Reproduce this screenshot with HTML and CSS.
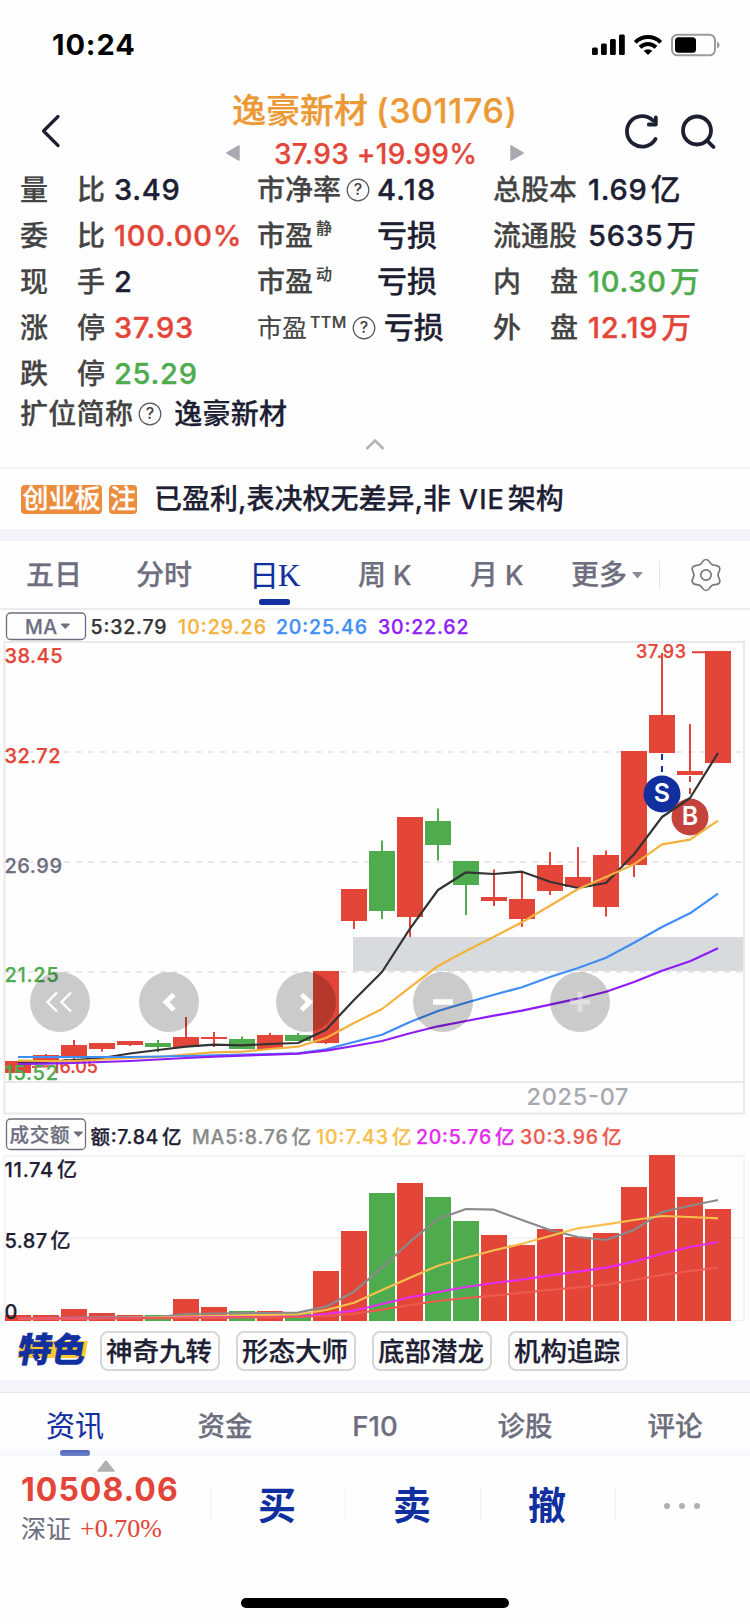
FILE: index.html
```html
<!DOCTYPE html>
<html lang="zh-CN">
<head>
<meta charset="utf-8">
<title>逸豪新材 (301176)</title>
<link rel="stylesheet" href="styles.css">
</head>
<body>
<div class="phone">
  <div class="status">
    <span class="clock">10:24</span>
    <svg class="status-icons" width="130" height="26" viewBox="590 32 130 26">
      <g>
        <rect x="592" y="47.500" width="5.800" height="7.500" rx="1.500"/>
        <rect x="601" y="43.500" width="5.800" height="11.500" rx="1.500"/>
        <rect x="610" y="39" width="5.800" height="16" rx="1.500"/>
        <rect x="619" y="34.500" width="5.800" height="20.500" rx="1.500"/>
      </g>
      <g fill="none" stroke="#000" stroke-width="4">
        <path d="M635.300 42.300a18 18 0 0 1 25.400 0"/>
        <path d="M640 47.300a11.500 11.500 0 0 1 16 0"/>
      </g>
      <path d="M643.700 50.800a6.500 6.500 0 0 1 8.600 0L648 55z"/>
      <rect x="672" y="34.700" width="43" height="20.600" rx="5.500" fill="none" stroke="#9b9b9b" stroke-width="2"/>
      <rect x="675" y="37.300" width="21" height="15.400" rx="3.500"/>
      <path d="M717 41.500q2.600 1 2.600 3.500t-2.600 3.500z" fill="#9b9b9b"/>
    </svg>
  </div>

  <header class="head">
    <svg class="back" width="22" height="36" viewBox="0 0 22 36"><path d="M18 3.500L3.500 18 18 32.500"/></svg>
    <div class="title">
      <div class="name"><span class="name-cn">逸豪新材</span><span class="name-code">(301176)</span></div>
      <div class="price">
        <svg width="14" height="16" viewBox="0 0 14 16"><path d="M13 1v14L1 8z"/></svg>
        <span class="price-text">37.93 +19.99%</span>
        <svg width="14" height="16" viewBox="0 0 14 16"><path d="M1 1v14l12-7z"/></svg>
      </div>
    </div>
    <svg class="tools" width="96" height="40" viewBox="622 112 96 40">
      <path d="M655.500 139a15.300 15.300 0 1 1-2.500-18.500"/>
      <path d="M655.800 117.500v7h-7"/>
      <circle cx="697" cy="130.500" r="14"/>
      <path d="M707.500 141l6 6"/>
    </svg>
  </header>

  <section class="stats">
    <div class="cell"><span class="lab spread"><i>量</i><i>比</i></span><span class="val">3.49</span></div>
    <div class="cell c2"><span class="lab">市净率</span><svg class="q q-a" viewBox="0 0 24 24"><circle cx="12" cy="12" r="10.800"/><text x="12" y="17.200">?</text></svg><span class="val">4.18</span></div>
    <div class="cell c3"><span class="lab spread">总股本</span><span class="val">1.69<b>亿</b></span></div>

    <div class="cell"><span class="lab spread"><i>委</i><i>比</i></span><span class="val red">100.00%</span></div>
    <div class="cell c2"><span class="lab wide">市盈<sup>静</sup></span><span class="val cn">亏损</span></div>
    <div class="cell c3"><span class="lab spread">流通股</span><span class="val">5635<b>万</b></span></div>

    <div class="cell"><span class="lab spread"><i>现</i><i>手</i></span><span class="val">2</span></div>
    <div class="cell c2"><span class="lab wide">市盈<sup>动</sup></span><span class="val cn">亏损</span></div>
    <div class="cell c3"><span class="lab spread"><i>内</i><i>盘</i></span><span class="val green">10.30<b>万</b></span></div>

    <div class="cell"><span class="lab spread"><i>涨</i><i>停</i></span><span class="val red">37.93</span></div>
    <div class="cell c2"><span class="lab ttm">市盈<sup>TTM</sup></span><svg class="q q-b" viewBox="0 0 24 24"><circle cx="12" cy="12" r="10.800"/><text x="12" y="17.200">?</text></svg><span class="val cn">亏损</span></div>
    <div class="cell c3"><span class="lab spread"><i>外</i><i>盘</i></span><span class="val red">12.19<b>万</b></span></div>

    <div class="cell"><span class="lab spread"><i>跌</i><i>停</i></span><span class="val green">25.29</span></div>
  </section>
  <div class="alias"><span class="lab">扩位简称</span><svg class="q" viewBox="0 0 24 24"><circle cx="12" cy="12" r="10.800"/><text x="12" y="17.200">?</text></svg><span class="alias-name">逸豪新材</span></div>
  <div class="fold"><svg width="20" height="12" viewBox="0 0 20 12"><path d="M1.500 11L10 2.500 18.500 11"/></svg></div>

  <div class="notice">
    <span class="tag">创业板</span><span class="tag tag-s">注</span>
    <span class="notice-text">已盈利,表决权无差异,非<em>VIE</em>架构</span>
  </div>

  <nav class="periods">
    <span class="p1">五日</span>
    <span class="p2">分时</span>
    <span class="p3 on">日<em>K</em></span>
    <span class="p4">周<em>K</em></span>
    <span class="p5">月<em>K</em></span>
    <span class="p6">更多<svg width="11" height="8" viewBox="0 0 11 8"><path d="M0 1h11L5.500 7.500z"/></svg></span>
    <span class="gear"><svg width="34" height="34" viewBox="-17 -17 34 34">
      <path d="M12 0C12 -3 15.150 -4.700 13.400 -7.750C11.650 -10.800 8.600 -8.900 6 -10.400"/>
      <path transform="rotate(60)" d="M12 0C12 -3 15.150 -4.700 13.400 -7.750C11.650 -10.800 8.600 -8.900 6 -10.400"/>
      <path transform="rotate(120)" d="M12 0C12 -3 15.150 -4.700 13.400 -7.750C11.650 -10.800 8.600 -8.900 6 -10.400"/>
      <path transform="rotate(180)" d="M12 0C12 -3 15.150 -4.700 13.400 -7.750C11.650 -10.800 8.600 -8.900 6 -10.400"/>
      <path transform="rotate(240)" d="M12 0C12 -3 15.150 -4.700 13.400 -7.750C11.650 -10.800 8.600 -8.900 6 -10.400"/>
      <path transform="rotate(300)" d="M12 0C12 -3 15.150 -4.700 13.400 -7.750C11.650 -10.800 8.600 -8.900 6 -10.400"/>
      <circle r="5.200"/></svg></span>
  </nav>

  <svg class="chart" width="750" height="715" viewBox="0 610 750 715">
    <g class="legend">
      <rect class="pick" x="6.500" y="613" width="79" height="26.500" rx="4"/>
      <text x="25" y="634" textLength="32" class="grey">MA</text>
      <path class="caret" d="M61 624h8.500l-4.200 4.500z"/>
      <text x="90.500" y="634.300" textLength="76" fill="#333" stroke="#333">5:32.79</text>
      <text x="178" y="634.300" textLength="88" fill="#f5b13d" stroke="#f5b13d">10:29.26</text>
      <text x="276" y="634.300" textLength="91" fill="#3f8ef7" stroke="#3f8ef7">20:25.46</text>
      <text x="378" y="634.300" textLength="90.500" fill="#8f1df5" stroke="#8f1df5">30:22.62</text>
    </g>
    <g class="frame">
      <path d="M4.500 642V1113.500H744V642zM4.500 1082H744"/>
      <path class="dash" d="M4 752H744M4 862H744M4 972H744"/>
      <path class="pale" d="M4.500 1156H744V1320.500H4.500zM4.500 1238H744"/>
    </g>
    <rect x="353" y="937" width="390" height="34" fill="#d7dbde"/>
    <g id="candles"></g>
    <g class="axis">
      <text x="4.500" y="662.500" textLength="58" class="red">38.45</text>
      <text x="4.500" y="762.500" textLength="56" class="red">32.72</text>
      <text x="4.500" y="872.500" textLength="57.500" class="grey">26.99</text>
      <text x="4.500" y="982" textLength="54" class="green">21.25</text>
    </g>
    <path d="M32 1067L52 1066M692 652.300H706" stroke="#e34639" stroke-width="2"/>
    <text x="52" y="1072.500" textLength="46" class="hilo">16.05</text>
    <text x="4.500" y="1080" textLength="53.500" class="axis-low">15.52</text>
    <text x="636" y="658" textLength="50" class="hilo">37.93</text>
    <path d="M662 754v18" stroke="#122f9f" stroke-width="2" stroke-dasharray="6 6"/>
    <path d="M690 776v18" stroke="#c4433d" stroke-width="2" stroke-dasharray="6 6"/>
    <circle cx="662" cy="794" r="18.500" fill="#122f9f"/>
    <circle cx="690" cy="817" r="18.500" fill="#c4433d"/>
    <text class="mark" x="662" y="802">S</text>
    <text class="mark" x="690" y="825">B</text>
    <g id="averages"></g>
    <g class="knobs">
      <circle cx="60" cy="1002" r="30"/><circle cx="169" cy="1002" r="30"/><circle cx="306" cy="1002" r="30"/><circle cx="443" cy="1002" r="30"/><circle cx="580" cy="1002" r="30"/>
    </g>
    <g fill="none" stroke="#fff">
      <path stroke-width="2.400" d="M57 992.500L47.500 1002l9.500 9.500M71 992.500L61.500 1002l9.500 9.500"/>
      <path stroke-width="5" d="M174 994.500L166 1002l8 8M301.500 994.500L309.500 1002l-8 8"/>
      <path stroke-width="5.500" d="M433 1002h20"/>
      <path stroke-width="5" stroke="rgba(255,255,255,.4)" d="M570 1002h17.500M590 1002h-2.500M580 992v7.500M580 1004.500v7.500"/>
    </g>
    <text class="month" x="526.500" y="1104.700" textLength="102">2025-07</text>

    <g class="legend">
      <rect class="pick" x="6.500" y="1119" width="79" height="30.500" rx="4"/>
      <text x="9.500" y="1142" textLength="60" class="grey">成交额</text>
      <path class="caret" d="M74 1132h8.500l-4.200 4.500z"/>
      <text x="90.500" y="1144.300" textLength="91" fill="#1d2033" stroke="#1d2033">额:7.84<tspan dx="3">亿</tspan></text>
      <text x="192" y="1144.300" textLength="119" fill="#8a8a8a" stroke="#8a8a8a">MA5:8.76<tspan dx="3">亿</tspan></text>
      <text x="316" y="1144.300" textLength="95.500" fill="#f5c04d" stroke="#f5c04d">10:7.43<tspan dx="3">亿</tspan></text>
      <text x="416" y="1144.300" textLength="98.500" fill="#e52df0" stroke="#e52df0">20:5.76<tspan dx="3">亿</tspan></text>
      <text x="520" y="1144.300" textLength="101.500" fill="#ec5a50" stroke="#ec5a50">30:3.96<tspan dx="3">亿</tspan></text>
    </g>
    <g id="volumes"></g>
    <g class="axis dark">
      <text x="4.500" y="1176.700" textLength="72.500">11.74<tspan dx="3">亿</tspan></text>
      <text x="4.500" y="1248.300" textLength="66">5.87<tspan dx="3">亿</tspan></text>
      <text x="4.500" y="1318.500">0</text>
    </g>
  </svg>

  <div class="features">
    <span class="special">特色</span>
    <span class="chip">神奇九转</span>
    <span class="chip">形态大师</span>
    <span class="chip">底部潜龙</span>
    <span class="chip">机构追踪</span>
  </div>

  <nav class="info">
    <span class="on">资讯</span><span>资金</span><span>F10</span><span>诊股</span><span>评论</span>
  </nav>

  <footer class="bar">
    <div class="index">
      <svg width="20" height="14" viewBox="0 0 20 14"><path d="M10 2l8 10H2z"/></svg>
      <div class="index-num">10508.06</div>
      <div class="index-sub"><span>深证</span><span class="chg">+0.70%</span></div>
    </div>
    <div class="act">买</div>
    <div class="act">卖</div>
    <div class="act">撤</div>
    <div class="act more"><i></i><i></i><i></i></div>
  </footer>
  <div class="home"></div>
</div>
<script src="chart.js"></script>
</body>
</html>
```

FILE: styles.css
```css
* { box-sizing: border-box; }
body {
  margin: 0;
  background: #fefefe;
  color: #1d2033;
  font-family: Inter, "Noto Sans CJK SC", sans-serif;
  font-weight: 500;
  -webkit-text-stroke: .25px;
}
i, em { font-style: normal; }
svg { display: block; flex: none; }
svg text { -webkit-text-stroke: 0; }
.red { color: #e34639; fill: #e34639; stroke: #e34639; }
.green { color: #4eab4e; fill: #4eab4e; stroke: #4eab4e; }
.grey { fill: #6e6e7e; stroke: #6e6e7e; }
.phone {
  width: 750px;
  height: 1624px;
  overflow: hidden;
  display: flex;
  flex-direction: column;
}

.status {
  height: 88px;
  padding: 2px 30px 0 52px;
  display: flex;
  align-items: center;
  justify-content: space-between;
}
.clock { color: #000; font-size: 29px; font-weight: 700; letter-spacing: .9px; -webkit-text-stroke: 0; margin-top: -1px; }

.head { height: 79px; display: flex; padding: 0 32px 0 40px; }
.back { margin-top: 25px; }
.back path, .tools path, .tools circle {
  fill: none; stroke: #1d2033; stroke-width: 3.8; stroke-linecap: round; stroke-linejoin: round;
}
.back path { stroke-width: 3.2; }
.title { flex: 1; padding: 0 0 0 164px; }
.name { display: flex; height: 45px; line-height: 46px; color: #ec9935; white-space: nowrap; }
.name-cn { width: 145px; padding-left: 6px; font-size: 34px; }
.name-code { font-size: 34px; padding-left: 5px; letter-spacing: .6px; }
.price { display: flex; align-items: center; height: 40px; }
.price path { fill: #a9a9b2; stroke: #a9a9b2; stroke-width: 1.5; stroke-linejoin: round; }
.price-text { width: 270px; padding: 1px 0 0 34px; font-size: 28px; letter-spacing: .3px; color: #e34639; white-space: nowrap; }
.tools { margin-top: 24px; }

.stats {
  display: grid;
  grid-template-columns: 237px 236px 236px;
  grid-auto-rows: 46px;
  padding-left: 20px;
  height: 230px;
}
.cell { display: flex; align-items: center; height: 46px; }
.lab { font-size: 28px; color: #444; line-height: 46px; white-space: nowrap; }
.spread { width: 85px; display: flex; justify-content: space-between; }
.val { font-size: 29px; line-height: 46px; height: 46px; padding-left: 9px; white-space: nowrap; letter-spacing: .75px; -webkit-text-stroke: .35px; }
.val b { font-weight: 500; margin-left: 3px; font-size: 30px; line-height: 1; letter-spacing: 0; -webkit-text-stroke: .25px; }
.c2 .val { padding-left: 7px; letter-spacing: 1.2px; }
.c2 .cn { font-size: 30px; line-height: 44px; padding-left: 8px; letter-spacing: 0; -webkit-text-stroke: .25px; }
.c3 .val { padding-left: 10px; }
.wide { width: 112px; }
.lab sup { font-size: 16px; line-height: 1; vertical-align: 12px; margin-left: 3px; -webkit-text-stroke: .2px; }
.ttm { font-size: 25px; font-weight: 400; -webkit-text-stroke: .1px; }
.ttm sup { letter-spacing: .4px; vertical-align: 9px; font-weight: 500; }
.q { width: 24px; height: 24px; }
.q circle { fill: none; stroke: #555; stroke-width: 1.2; }
.q text { font-size: 16px; text-anchor: middle; fill: #444; }
.q-a { margin-left: 5px; }
.q-b { margin-left: 5px; }
.alias { height: 36px; padding-left: 20px; display: flex; align-items: center; }
.alias .lab { line-height: 34px; height: 36px; letter-spacing: .3px; }
.alias .q { margin-left: 5px; margin-top: -2px; }
.alias-name { font-size: 28px; margin-left: 12px; line-height: 34px; height: 36px; letter-spacing: .3px; }
.fold { height: 35px; padding-top: 5px; display: flex; justify-content: center; }
.fold path { fill: none; stroke: #b3b3b3; stroke-width: 2.6; }

.notice {
  height: 74px;
  border-top: 2px solid #f1f2f5;
  border-bottom: 12px solid #f4f5fa;
  padding: 1px 0 0 21px;
  display: flex;
  align-items: center;
  margin-top: -1px;
}
.tag {
  height: 29px; line-height: 28px; width: 81px; margin-right: 7px;
  background: #ec8c3d; color: #fff; border-radius: 4px; font-size: 26px; text-align: center; white-space: nowrap;
}
.tag-s { width: 28px; margin-right: 17px; }
.notice-text { font-size: 28px; white-space: nowrap; line-height: 42px; }
.notice-text em { font-size: 27px; margin: 0 3px 0 8px; letter-spacing: 1px; }

.periods {
  height: 69px;
  border-bottom: 2px solid #ececee;
  display: flex;
  align-items: center;
  font-size: 28px;
  color: #6e6e7e;
  white-space: nowrap;
}
.periods span { line-height: 68px; height: 67px; }
.periods em { margin-left: 7px; font-size: 27px; }
.p1 { width: 110px; padding-left: 26px; }
.p2 { width: 111px; padding-left: 26px; }
.p3 { width: 107px; padding-left: 28px; }
.p4 { width: 113px; padding-left: 30px; }
.p5 { width: 101px; padding-left: 29px; }
.p6 { width: 117px; padding-left: 29px; display: flex; align-items: center; }
.p6 svg { margin-left: 5px; }
.p6 path { fill: #8c8c96; }
.p3.on { color: #122f9f; font-size: 30px; font-weight: 400; -webkit-text-stroke: .15px; }
.p3.on::after { content: ""; display: block; width: 31px; height: 6px; border-radius: 2.5px; background: #122f9f; margin: -11px 0 0 10px; }
.p3.on em { font-family: "Liberation Serif", serif; font-size: 31px; margin-left: -1px; }
.periods .gear { height: 28px; border-left: 1px solid #e6e6ea; padding-left: 29px; display: flex; align-items: center; }
.gear path, .gear circle { fill: none; stroke: #777; stroke-width: 1.7; }

.chart { font-family: Inter, "Noto Sans CJK SC", sans-serif; font-weight: 500; }
.chart text { stroke-width: .25px; }
.legend { font-size: 19.5px; }
.legend .pick { fill: none; stroke: #6e6e7e; stroke-width: 1.3; }
.caret { fill: #6e6e7e; stroke: #6e6e7e; stroke-linejoin: round; }
.frame path { fill: none; stroke: #e9e9eb; stroke-width: 2; }
.frame .dash { stroke-dasharray: 6 6; }
.frame .pale { stroke: #f1f1f3; stroke-width: 1.5; }
.axis { font-size: 20px; }
.dark { fill: #1d2033; stroke: #1d2033; }
.axis-low { font-size: 20px; fill: #4eab4e; stroke: #4eab4e; }
.hilo { font-size: 18px; fill: #e34639; stroke: #e34639; }
.mark { font-size: 25px; font-weight: 600; fill: #fff; text-anchor: middle; }
.knobs { fill: rgba(0, 0, 0, .2); }
.month { font-size: 23.5px; fill: #a8a8b0; }
.up { fill: #e34639; }
.down { fill: #4eab4e; }
.line { fill: none; stroke-width: 2.2; stroke-linejoin: round; }

.features { height: 67px; padding: 6px 0 0 18px; display: flex; border-bottom: 12px solid #f4f5fa; }
.special {
  width: 82px; height: 40px; line-height: 38px;
  font-size: 34px; font-weight: 900; color: #122f9f; white-space: nowrap; -webkit-text-stroke: .6px;
  transform: skewX(-10deg);
  background: linear-gradient(#f7c834, #f7c834) no-repeat 1px 10px / 67px 17px;
}
.chip {
  width: 120px; height: 40px; line-height: 37px; margin-right: 16px; padding-right: 2px;
  border: 2px solid #d6d6d8; border-radius: 8px; text-align: center; font-size: 26.5px; white-space: nowrap;
}

.info {
  height: 64px; display: flex; border-top: 1px solid #e8e9ee; color: #6e6e7e; font-size: 27.5px;
  background: linear-gradient(#fefefe 78%, #f8f9fc);
}
.info span { flex: 1 1 0; text-align: center; line-height: 67px; }
.info .on { color: #122f9f; font-size: 29px; font-weight: 400; -webkit-text-stroke: .1px; }
.info .on::after { content: ""; display: block; width: 30px; height: 6px; border-radius: 2.5px; background: linear-gradient(#5069bc, #6f83c8); margin: -10px auto 0; }

.bar { height: 110px; display: flex; padding-top: 3px; }
.index { width: 210px; padding-left: 21px; }
.index svg { margin-left: 75px; }
.index path { fill: #b0b0b0; stroke: #b0b0b0; stroke-width: 1.5; stroke-linejoin: round; }
.index-num { font-size: 32px; line-height: 33px; font-weight: 700; color: #e34639; letter-spacing: 1px; -webkit-text-stroke: 0; }
.index-sub { display: flex; align-items: center; line-height: 46px; font-size: 25px; font-weight: 400; color: #6e6e7e; -webkit-text-stroke: .1px; }
.chg { font-family: "Liberation Serif", serif; font-size: 26px; color: #e34639; margin-left: 9px; }
.act {
  width: 135px; height: 34px; margin-top: 28px; line-height: 36px; border-left: 1.5px solid #f0f1f7; padding-right: 2px;
  text-align: center; font-size: 38px; font-weight: 700; color: #122f9f; -webkit-text-stroke: 0;
}
.more { display: flex; align-items: center; justify-content: center; gap: 9px; padding-top: 4px; }
.more i { width: 6px; height: 6px; border-radius: 3px; background: #b0b0b0; }
.home { width: 268px; height: 10px; border-radius: 5px; background: #000; margin: 32px 0 0 241px; }
```

FILE: chart.js
```js
// Candles: [body top, body bottom, wick top, wick bottom, rising]
const candles = [
  [1061,1073,1061,1073,1],[1055,1062,1054,1062,1],[1045,1057,1040,1060,1],[1043,1049,1043,1051.5,1],
  [1041,1045,1041,1046,1],[1043,1047,1040,1052,0],[1037,1047,1017,1047,1],[1037,1039,1032,1047,1],
  [1039,1049,1036.5,1049,0],[1035,1049,1033,1049,1],[1035,1041,1033,1041,0],[971,1043,971,1044,1],
  [889,921,889,929,1],[851,911,840.5,919,0],[817,917,817,937,1],[821,845,808.5,860.5,0],
  [861,885,861,915,0],[897,901,869.5,906,1],[899,919,872,927,1],[865,891,852,895,1],
  [877,887,847,887,1],[855,907,850.5,916.5,1],[751,865,751,877,1],[715,753,653,753,1],
  [771,775,724,775,1],[651,763,651,763,1]
];
const averages = {
  '#333333': [1062.5,1062,1060,1058,1053.5,1050,1046.7,1044.7,1045.3,1044,1043,1029.7,1000,972,928.7,890,872.3,874,871.7,881.7,888,883,854.3,817,798,753],
  '#f5b13d': [1060.7,1061,1061,1059.5,1058,1057,1054.5,1052.3,1051.7,1049,1046.7,1038,1023,1009,987.3,966,951,936.7,922.3,905.7,889,877,864.3,844.3,839.7,820.7],
  '#3f8ef7': [1057,1057,1057,1057,1057,1056.5,1056,1055.3,1054.7,1054,1053.3,1049.3,1042,1034.7,1022,1011,1002.7,994.7,987.3,977,968,957.7,942.7,927,913.3,893.7],
  '#8f1df5': [1064,1063.7,1063,1062,1061,1059.5,1058,1056.7,1055.7,1054.7,1053.7,1050.7,1046,1041,1033.3,1026.3,1021,1015.7,1010.7,1004.7,998.7,991.7,982,970.7,961.3,948.3]
};
const volumes = [1315,1315,1309,1313,1315,1315,1299,1307,1311,1311,1313,1271,1231,1193,1183,1197,1221,1235,1245,1229,1237,1233,1187,1155,1197,1209];
const volumeAverages = {
  '#8a8a8a': [1318.5,1318,1317.5,1317.2,1317,1317,1314,1313.5,1313,1313,1312.7,1306.7,1291.7,1267.7,1241.7,1219,1209,1209.7,1220,1230,1237,1240,1230,1212,1205.7,1200],
  '#f5c04d': [1318.7,1318.5,1318.3,1318,1317.8,1317.5,1316.7,1316,1315.3,1315,1314.5,1310,1302.7,1290,1277.7,1265.7,1257.7,1250.3,1243.7,1236,1228.3,1224.3,1220,1216,1217,1218.3],
  '#e52df0': [1318.5,1318.5,1318.3,1318.2,1318,1318,1317.7,1317.3,1317,1317,1316.7,1314,1310.7,1304,1297.3,1292,1287,1283,1279.7,1275.3,1271.7,1267.7,1261.7,1253.7,1247,1242],
  '#ec5a50': [1318.5,1318.5,1318.5,1318.4,1318.3,1318.2,1318,1317.8,1317.5,1317.3,1317,1316,1313.7,1309.7,1305,1301,1298,1295.7,1292.7,1290,1287.3,1284.7,1280,1275,1271,1267.7]
};
const left = i => 5 + i * 28;
const rect = (x, y, w, h, up) => `<rect class="${up ? 'up' : 'down'}" x="${x}" y="${y}" width="${w}" height="${h}"/>`;
const lines = set => Object.entries(set).map(([color, ys]) =>
  `<polyline class="line" stroke="${color}" points="${ys.map((y, i) => `${left(i) + 13},${y}`).join(' ')}"/>`).join('');

document.getElementById('candles').innerHTML = candles.map(([top, bottom, high, low, up], i) =>
  rect(left(i), top, 26, bottom - top, up) + rect(left(i) + 12, high, 2, low - high, up)).join('');
document.getElementById('averages').innerHTML = lines(averages);
document.getElementById('volumes').innerHTML = volumes.map((top, i) =>
  rect(left(i), top, 26, 1321 - top, candles[i][4])).join('') + lines(volumeAverages);
```
